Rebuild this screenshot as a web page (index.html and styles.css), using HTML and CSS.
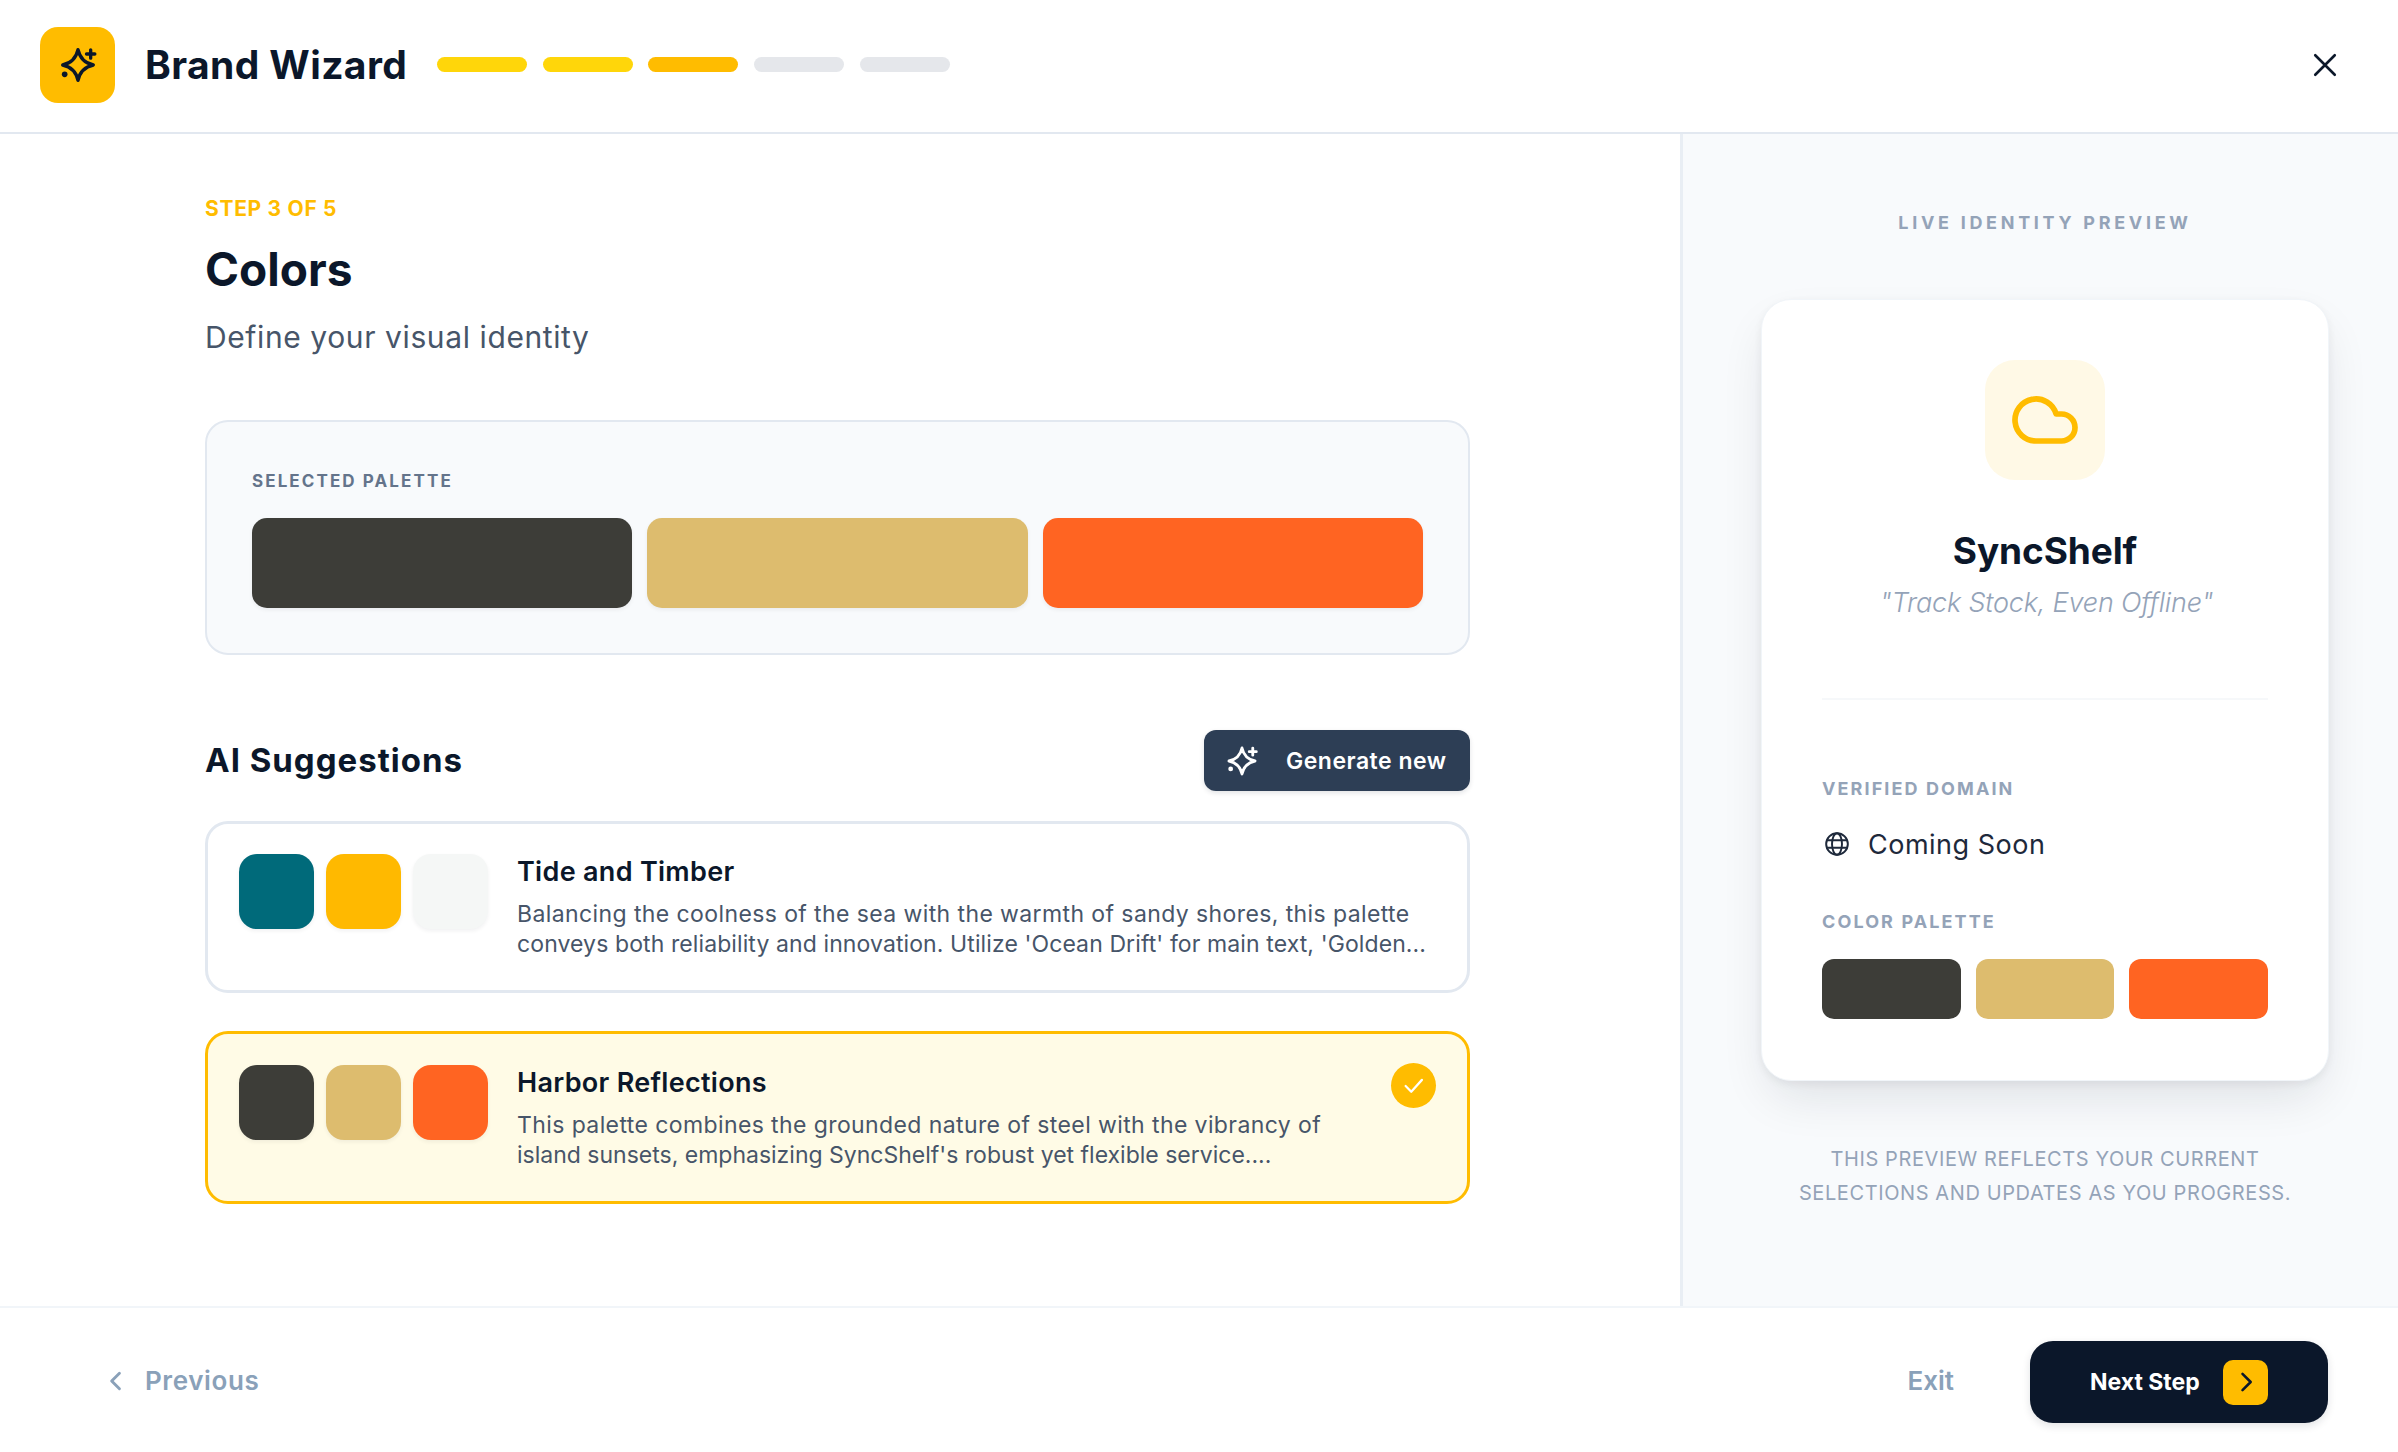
FILE: index.html
```html
<!DOCTYPE html>
<html lang="en">
<head>
    <meta charset="UTF-8">
    <title>Brand Wizard</title>
    <link rel="stylesheet" href="styles.css">
</head>
<body>
    <svg class="defs" width="0" height="0">
        <symbol id="sparkle" viewBox="0 0 24 24">
            <path d="M12 2.8C13.1 7.9 16.1 10.9 21.2 12C16.1 13.1 13.1 16.1 12 21.2C10.9 16.1 7.9 13.1 2.8 12C7.9 10.9 10.9 7.9 12 2.8Z" fill="none" stroke="currentColor" stroke-width="2" stroke-linejoin="round"/>
            <path d="M19.6 2.9V7.9M17.1 5.4H22.1" fill="none" stroke="currentColor" stroke-width="2" stroke-linecap="round"/>
            <circle cx="4" cy="17.6" r="1.7" fill="currentColor"/>
        </symbol>
    </svg>
    <div class="app">
        <header class="topBar">
            <div class="logo"><svg class="logoIcon"><use href="#sparkle"/></svg></div>
            <h1 class="brandName">Brand Wizard</h1>
            <div class="progress">
                <i class="done"></i>
                <i class="done"></i>
                <i class="current"></i>
                <i></i>
                <i></i>
            </div>
            <svg class="closeIcon" viewBox="0 0 24 24"><path d="M3 3L21 21M21 3L3 21"/></svg>
        </header>

        <main class="main">
            <section class="editor">
                <div class="stepLabel">STEP 3 OF 5</div>
                <h2 class="stepTitle">Colors</h2>
                <p class="stepSub">Define your visual identity</p>

                <div class="selected">
                    <div class="selectedLabel">SELECTED PALETTE</div>
                    <div class="selectedRow">
                        <span class="swatch steel"></span>
                        <span class="swatch sand"></span>
                        <span class="swatch flame"></span>
                    </div>
                </div>

                <div class="suggestHead">
                    <h3 class="suggestTitle">AI Suggestions</h3>
                    <div class="generateBtn">
                        <svg class="generateIcon"><use href="#sparkle"/></svg>
                        <span>Generate new</span>
                    </div>
                </div>

                <div class="option">
                    <div class="optionSwatches">
                        <span class="swatch ocean"></span>
                        <span class="swatch gold"></span>
                        <span class="swatch mist"></span>
                    </div>
                    <div class="optionText">
                        <div class="optionName">Tide and Timber</div>
                        <p class="optionDesc">
                            <span class="wide">Balancing the coolness of the sea with the warmth of sandy shores, this palette</span>
                            <span class="snug">conveys both reliability and innovation. Utilize 'Ocean Drift' for main text, 'Golden...</span>
                        </p>
                    </div>
                </div>

                <div class="option active">
                    <div class="optionSwatches">
                        <span class="swatch steel"></span>
                        <span class="swatch sand"></span>
                        <span class="swatch flame"></span>
                    </div>
                    <div class="optionText">
                        <div class="optionName">Harbor Reflections</div>
                        <p class="optionDesc">
                            <span class="wide">This palette combines the grounded nature of steel with the vibrancy of</span>
                            <span>island sunsets, emphasizing SyncShelf's robust yet flexible service....</span>
                        </p>
                    </div>
                    <div class="check">
                        <svg viewBox="0 0 24 24"><path d="M5 12.5L10 17.5L19.5 7"/></svg>
                    </div>
                </div>
            </section>

            <aside class="preview">
                <div class="previewLabel">LIVE IDENTITY PREVIEW</div>
                <div class="previewCard">
                    <div class="cloudBox">
                        <svg class="cloudIcon" viewBox="0 0 24 24"><path d="M17.5 19H9a7 7 0 1 1 6.71-9h1.79a4.5 4.5 0 1 1 0 9Z"/></svg>
                    </div>
                    <div class="previewName">SyncShelf</div>
                    <div class="previewTag">"Track Stock, Even Offline"</div>
                    <div class="previewRule"></div>
                    <div class="fieldLabel">VERIFIED DOMAIN</div>
                    <div class="domainRow">
                        <svg class="globeIcon" viewBox="0 0 24 24">
                            <circle cx="12" cy="12" r="10"/>
                            <ellipse cx="12" cy="12" rx="4.6" ry="10"/>
                            <path d="M2.6 8.6H21.4M2.6 15.4H21.4"/>
                        </svg>
                        <span>Coming Soon</span>
                    </div>
                    <div class="fieldLabel paletteLabel">COLOR PALETTE</div>
                    <div class="previewSwatches">
                        <span class="swatch steel"></span>
                        <span class="swatch sand"></span>
                        <span class="swatch flame"></span>
                    </div>
                </div>
                <p class="previewNote">THIS PREVIEW REFLECTS YOUR CURRENT<br>SELECTIONS AND UPDATES AS YOU PROGRESS.</p>
            </aside>
        </main>

        <footer class="bottomBar">
            <div class="prevBtn">
                <svg viewBox="0 0 12 18"><path d="M10 2L3 9L10 16"/></svg>
                <span>Previous</span>
            </div>
            <div class="bottomRight">
                <span class="exitBtn">Exit</span>
                <div class="nextBtn">
                    <span>Next Step</span>
                    <span class="nextArrow"><svg viewBox="0 0 24 24"><path d="M9 5L16 12L9 19"/></svg></span>
                </div>
            </div>
        </footer>
    </div>
</body>
</html>
```

FILE: styles.css
```css
* {
    padding: 0;
    margin: 0;
    box-sizing: border-box;
}
body {
    background: #fff;
    font-family: Inter, "Liberation Sans", sans-serif;
    color: #0b172a;
}
.defs {
    display: block;
}
.app {
    display: flex;
    flex-direction: column;
    width: 2398px;
    height: 1452px;
    overflow: hidden;
}

/* top bar */
.topBar {
    display: flex;
    align-items: center;
    flex: none;
    height: 134px;
    padding: 0 40px 3px;
    border-bottom: 2px solid #e2e8f0;
}
.logo {
    display: flex;
    align-items: center;
    justify-content: center;
    width: 75px;
    height: 76px;
    border-radius: 18px;
    background: #ffbc00;
    color: #0b172a;
}
.logoIcon {
    width: 40px;
    height: 40px;
}
.brandName {
    margin-left: 30px;
    font-size: 39px;
    line-height: 50px;
    font-weight: 700;
    letter-spacing: 0.4px;
}
.progress {
    display: flex;
    gap: 15.6px;
    margin-left: 30px;
}
.progress i {
    display: block;
    width: 90px;
    height: 15px;
    border-radius: 8px;
    background: #e5e7eb;
}
.progress i.done {
    background: #ffd60a;
}
.progress i.current {
    background: #ffbc00;
}
.closeIcon {
    width: 26px;
    height: 26px;
    margin-left: auto;
    margin-right: 20px;
    fill: none;
    stroke: #0b172a;
    stroke-width: 2.4;
    stroke-linecap: round;
}

/* main area */
.main {
    display: flex;
    flex: 1;
    min-height: 0;
}
.editor {
    width: 1680px;
    flex: none;
    padding: 60px 210px 0 205px;
}
.stepLabel {
    font-size: 21px;
    line-height: 30px;
    font-weight: 700;
    color: #ffbc00;
    letter-spacing: 0.7px;
}
.stepTitle {
    margin-top: 15px;
    font-size: 46px;
    line-height: 60px;
    font-weight: 700;
    letter-spacing: 0;
}
.stepSub {
    margin-top: 16px;
    font-size: 30px;
    line-height: 44px;
    font-weight: 400;
    letter-spacing: 0.6px;
    color: #475569;
}

.selected {
    height: 235px;
    margin-top: 61px;
    padding: 0 45px;
    border: 2px solid #e2e8f0;
    border-radius: 23px;
    background: #f8fafc;
}
.selectedLabel {
    padding-top: 47px;
    font-size: 17px;
    line-height: 24px;
    font-weight: 700;
    letter-spacing: 2.1px;
    color: #64748b;
}
.selectedRow {
    display: flex;
    gap: 15px;
    margin-top: 25px;
}
.selectedRow .swatch {
    flex: 1;
    height: 90px;
    border-radius: 15px;
    box-shadow: 0 2px 4px rgba(15, 23, 42, 0.06);
}
.swatch {
    display: block;
}
.steel { background: #3d3d38; }
.sand { background: #ddbc6e; }
.flame { background: #ff6422; }
.ocean { background: #006a7a; }
.gold { background: #ffb900; }
.mist { background: #f5f7f6; }

.suggestHead {
    display: flex;
    align-items: center;
    justify-content: space-between;
    margin-top: 75px;
}
.suggestTitle {
    padding-bottom: 2px;
    font-size: 33px;
    line-height: 44px;
    font-weight: 700;
    letter-spacing: 1px;
}
.generateBtn {
    display: flex;
    align-items: center;
    width: 266px;
    height: 61px;
    padding-left: 21px;
    border-radius: 12px;
    background: #2d3e55;
    color: #fff;
    font-size: 23px;
    font-weight: 600;
    letter-spacing: 0.5px;
    box-shadow: 0 2px 5px rgba(15, 23, 42, 0.12);
}
.generateIcon {
    width: 34px;
    height: 34px;
    margin-right: 27px;
}

.option {
    position: relative;
    display: flex;
    gap: 29px;
    height: 172px;
    margin-top: 38px;
    padding: 30px 31px;
    border: 3px solid #e2e8f0;
    border-radius: 23px;
    background: #fff;
}
.suggestHead + .option {
    margin-top: 30px;
}
.option.active {
    height: 173px;
    padding-top: 31px;
    border-color: #ffbc00;
    background: #fffbe6;
}
.optionSwatches {
    display: flex;
    gap: 12px;
    flex: none;
}
.optionSwatches .swatch {
    width: 75px;
    height: 75px;
    border-radius: 18px;
    box-shadow: 0 2px 4px rgba(15, 23, 42, 0.06);
}
.optionName {
    font-size: 27px;
    line-height: 36px;
    font-weight: 600;
    letter-spacing: 0.3px;
}
.optionDesc {
    margin-top: 9px;
    font-size: 23px;
    line-height: 30px;
    color: #475569;
    white-space: nowrap;
}
.optionDesc span {
    display: block;
}
.optionDesc .wide {
    letter-spacing: 0.4px;
}
.optionDesc .snug {
    letter-spacing: 0.1px;
}
.check {
    position: absolute;
    top: 29px;
    right: 31px;
    display: flex;
    align-items: center;
    justify-content: center;
    width: 45px;
    height: 45px;
    border-radius: 50%;
    background: #ffbc00;
}
.check svg {
    width: 27px;
    height: 27px;
    fill: none;
    stroke: #fff;
    stroke-width: 2;
    stroke-linecap: round;
    stroke-linejoin: round;
}

/* right preview */
.preview {
    flex: 1;
    padding: 77px 69px 0 78px;
    border-left: 3px solid #e9eef4;
    background: #f8fafc;
}
.previewLabel {
    font-size: 18px;
    line-height: 24px;
    font-weight: 700;
    letter-spacing: 3.7px;
    color: #94a3b8;
    text-align: center;
}
.previewCard {
    height: 782px;
    margin-top: 64px;
    padding: 60px 60px 0;
    border: 1px solid #f1f5f9;
    border-radius: 30px;
    background: #fff;
    box-shadow: 0 22px 50px -10px rgba(15, 23, 42, 0.12), 0 3px 8px rgba(15, 23, 42, 0.06);
}
.cloudBox {
    display: flex;
    align-items: center;
    justify-content: center;
    width: 120px;
    height: 120px;
    margin: 0 auto;
    border-radius: 30px;
    background: #fff9e6;
}
.cloudIcon {
    width: 72px;
    height: 72px;
    fill: none;
    stroke: #ffbc00;
    stroke-width: 1.9;
    stroke-linejoin: round;
}
.previewName {
    margin-top: 45px;
    font-size: 37px;
    line-height: 52px;
    font-weight: 700;
    letter-spacing: -0.1px;
    text-align: center;
}
.previewTag {
    margin-top: 6px;
    padding-left: 3px;
    font-size: 27px;
    line-height: 40px;
    font-weight: 300;
    font-style: italic;
    letter-spacing: -0.2px;
    color: #94a3b8;
    text-align: center;
}
.previewRule {
    height: 2px;
    margin-top: 75px;
    background: #f6f8fa;
}
.fieldLabel {
    margin-top: 77px;
    font-size: 18px;
    line-height: 24px;
    font-weight: 700;
    letter-spacing: 2.1px;
    color: #94a3b8;
}
.fieldLabel.paletteLabel {
    margin-top: 46px;
}
.domainRow {
    display: flex;
    align-items: center;
    gap: 18px;
    height: 40px;
    margin-top: 23px;
    padding-left: 2px;
    font-size: 27px;
    letter-spacing: 0.5px;
    color: #1e293b;
}
.globeIcon {
    width: 26px;
    height: 26px;
    fill: none;
    stroke: #1e293b;
    stroke-width: 1.8;
}
.previewSwatches {
    display: flex;
    gap: 15px;
    margin-top: 25px;
}
.previewSwatches .swatch {
    flex: 1;
    height: 60px;
    border-radius: 12px;
}
.previewNote {
    margin-top: 61px;
    font-size: 20px;
    line-height: 34px;
    letter-spacing: 0.6px;
    color: #94a3b8;
    text-align: center;
    white-space: nowrap;
}

/* bottom bar */
.bottomBar {
    display: flex;
    align-items: center;
    justify-content: space-between;
    flex: none;
    height: 146px;
    padding: 4px 70px 0 108px;
    border-top: 2px solid #f1f5f9;
}
.prevBtn {
    display: flex;
    align-items: center;
    gap: 23px;
    padding-bottom: 3px;
    font-size: 26px;
    font-weight: 600;
    letter-spacing: 0.6px;
    color: #8aa1b9;
}
.prevBtn svg {
    width: 14px;
    height: 20px;
    fill: none;
    stroke: #8aa1b9;
    stroke-width: 2.6;
    stroke-linecap: round;
    stroke-linejoin: round;
}
.bottomRight {
    display: flex;
    align-items: center;
    gap: 76px;
}
.exitBtn {
    padding-bottom: 3px;
    font-size: 26px;
    font-weight: 600;
    color: #8aa1b9;
}
.nextBtn {
    display: flex;
    align-items: center;
    justify-content: space-between;
    width: 298px;
    height: 82px;
    padding: 0 60px;
    border-radius: 23px;
    background: #0b172a;
    color: #fff;
    font-size: 23px;
    font-weight: 700;
    box-shadow: 0 3px 8px rgba(15, 23, 42, 0.12);
}
.nextArrow {
    display: flex;
    align-items: center;
    justify-content: center;
    width: 45px;
    height: 45px;
    border-radius: 10px;
    background: #ffbc00;
}
.nextArrow svg {
    width: 28px;
    height: 28px;
    fill: none;
    stroke: #0b172a;
    stroke-width: 2.2;
    stroke-linecap: round;
    stroke-linejoin: round;
}
```
